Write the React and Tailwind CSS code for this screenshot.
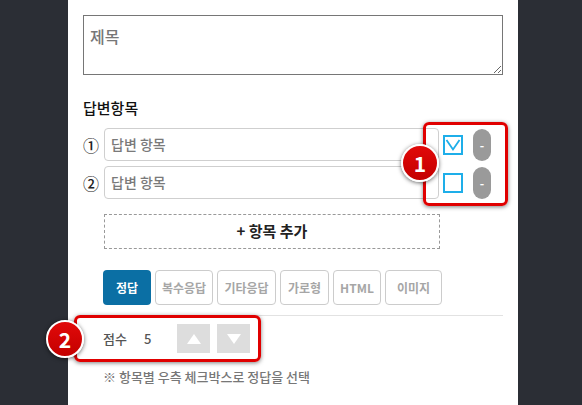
import React from "react";

const font = { fontFamily: '"Noto Sans CJK KR", "Noto Sans", sans-serif' };

function Badge({ n, className }) {
  return (
    <div
      className={`absolute w-[38px] h-[38px] rounded-full border-[2px] border-white bg-gradient-to-b from-[#e10a0a] to-[#c40000] shadow-[0_1px_4px_rgba(0,0,0,0.6)] flex items-center justify-center text-white font-bold text-[21px] leading-none ${className}`}
    >
      {n}
    </div>
  );
}

function Check({ checked }) {
  return (
    <div className="w-[20px] h-[20px] border-[2px] border-[#1eaee9] bg-white flex items-center justify-center shrink-0">
      {checked && (
        <svg width="16" height="16" viewBox="0 0 16 16">
          <path d="M1.5 3 L8 12.5 L14.5 3" fill="none" stroke="#1eaee9" strokeWidth="1.8" />
        </svg>
      )}
    </div>
  );
}

function Pill() {
  return (
    <div className="w-[18px] h-[32px] rounded-full bg-[#9a9a9a] flex items-center justify-center text-white text-[12px] font-bold leading-none shrink-0">
      -
    </div>
  );
}

function Row({ num, checked }) {
  return (
    <div className="flex items-center h-[33px]">
      <span className="w-[21px] text-[16px] font-medium text-[#222] leading-none">{num}</span>
      <div className="w-[335px] h-[33px] border border-[#cfcfcf] rounded-[4px] flex items-center pl-[6px] text-[14px] font-medium text-[#7a7a7a]">
        답변 항목
      </div>
      <div className="ml-[4px]">
        <Check checked={checked} />
      </div>
      <div className="ml-[10px]">
        <Pill />
      </div>
    </div>
  );
}

const tabs = [
  { t: "복수응답", w: "w-[58px]" },
  { t: "기타응답", w: "w-[59px]" },
  { t: "가로형", w: "w-[49px]" },
  { t: "HTML", w: "w-[48px]" },
  { t: "이미지", w: "w-[57px]" },
];

export default function App() {
  return (
    <div className="w-[582px] h-[405px] bg-[#2b2e35] overflow-hidden relative" style={font}>
      <div className="ml-[68px] w-[450px] h-[405px] bg-white px-[15px] pt-[15px] relative">
        <textarea
          placeholder="제목"
          className="block w-[420px] h-[60px] border border-[#767676] px-[6px] pt-[8px] text-[16px] font-medium placeholder:text-[#777] outline-none"
          style={font}
        />
        <div className="mt-[23px] text-[15px] leading-[20px] font-medium text-[#111]">답변항목</div>
        <div className="mt-[10px] flex flex-col gap-[5px]">
          <Row num="①" checked />
          <Row num="②" />
        </div>
        <div className="ml-[21px] mt-[15px] w-[336px] h-[35px] border border-dashed border-[#999] flex items-center justify-center text-[15px] font-bold text-[#222]">
          + 항목 추가
        </div>
        <div className="mt-[21px] ml-[20px] flex gap-[4px]">
          <div className="w-[48px] h-[35px] rounded-[4px] bg-[#0b6fa4] text-white text-[12px] font-bold flex items-center justify-center">
            정답
          </div>
          {tabs.map((x) => (
            <div
              key={x.t}
              className={`${x.w} h-[35px] rounded-[4px] border border-[#cccccc] text-[#a6a6a6] text-[12px] font-bold flex items-center justify-center`}
            >
              {x.t}
            </div>
          ))}
        </div>
        <div className="mt-[10px] h-px bg-[#e2e2e2]" />
        <div className="ml-[20px] mt-[8px] h-[29px] flex items-center text-[13px] font-medium text-[#555]">
          <span>점수</span>
          <span className="ml-[17px]">5</span>
          <div className="ml-[26px] w-[33px] h-[29px] bg-[#dddddd] flex items-center justify-center">
            <svg width="14" height="10" viewBox="0 0 14 10">
              <path d="M7 0 L14 10 L0 10 Z" fill="#fff" />
            </svg>
          </div>
          <div className="ml-[7px] w-[33px] h-[29px] bg-[#dddddd] flex items-center justify-center">
            <svg width="14" height="10" viewBox="0 0 14 10">
              <path d="M0 0 L14 0 L7 10 Z" fill="#fff" />
            </svg>
          </div>
        </div>
        <div className="ml-[20px] mt-[14px] text-[13px] font-medium text-[#777]">
          ※ 항목별 우측 체크박스로 정답을 선택
        </div>
      </div>

      {/* annotations */}
      <div className="absolute left-[423px] top-[122px] w-[85px] h-[84px] border-[3px] border-[#e00000] rounded-[6px] shadow-[0_1px_4px_rgba(0,0,0,0.5)]" />
      <Badge n="1" className="left-[401px] top-[144px]" />
      <div className="absolute left-[74px] top-[315px] w-[187px] h-[47px] border-[3px] border-[#e00000] rounded-[6px] shadow-[0_1px_4px_rgba(0,0,0,0.5)]" />
      <Badge n="2" className="left-[46px] top-[320px]" />
    </div>
  );
}
